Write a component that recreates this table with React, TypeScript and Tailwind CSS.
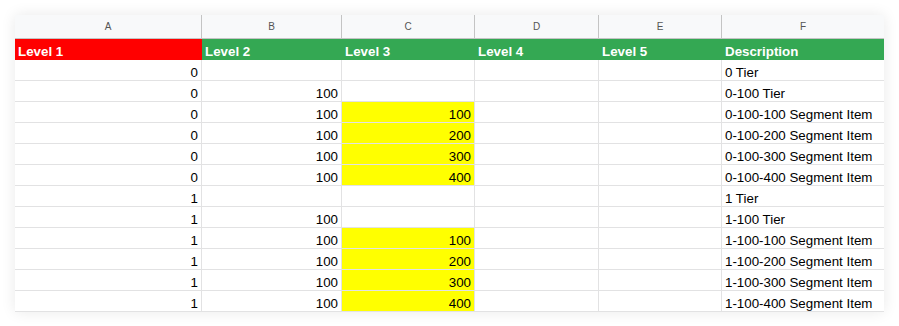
import React from "react";

type Row = { a: string; b: string; c: string; f: string };

const rows: Row[] = [
  { a: "0", b: "", c: "", f: "0 Tier" },
  { a: "0", b: "100", c: "", f: "0-100 Tier" },
  { a: "0", b: "100", c: "100", f: "0-100-100 Segment Item" },
  { a: "0", b: "100", c: "200", f: "0-100-200 Segment Item" },
  { a: "0", b: "100", c: "300", f: "0-100-300 Segment Item" },
  { a: "0", b: "100", c: "400", f: "0-100-400 Segment Item" },
  { a: "1", b: "", c: "", f: "1 Tier" },
  { a: "1", b: "100", c: "", f: "1-100 Tier" },
  { a: "1", b: "100", c: "100", f: "1-100-100 Segment Item" },
  { a: "1", b: "100", c: "200", f: "1-100-200 Segment Item" },
  { a: "1", b: "100", c: "300", f: "1-100-300 Segment Item" },
  { a: "1", b: "100", c: "400", f: "1-100-400 Segment Item" },
];

const cols = ["A", "B", "C", "D", "E", "F"];
const levels = ["Level 1", "Level 2", "Level 3", "Level 4", "Level 5", "Description"];

const grid = "grid grid-cols-[187px_140px_133px_124px_123px_162px]";
// sheets cells sit text on the bottom edge
const cell = "h-[21px] border-r border-b border-[#e2e2e3] px-[3px] flex items-end leading-[15px]";

export default function App() {
  return (
    <div className="w-[899px] h-[326px] bg-white p-[15px] font-['Liberation_Sans',Arial,sans-serif] text-[13.33px] text-black">
      <div className="w-[869px] h-[297px] bg-white shadow-[0_0_14px_rgba(0,0,0,0.09)] overflow-hidden">
        {/* column letters */}
        <div className={grid + " h-[24px] bg-[#f8f9fa] border-b border-[#c4c4c4]"}>
          {cols.map((c, i) => (
            <div
              key={c}
              className={
                "flex items-center justify-center text-[10px] text-[#555] " +
                (i < cols.length - 1 ? "border-r border-[#c4c4c4]" : "")
              }
            >
              {c}
            </div>
          ))}
        </div>

        {/* header row */}
        <div className={grid + " h-[21px] font-bold text-white"}>
          {levels.map((l, i) => (
            <div
              key={l}
              className={
                "flex items-end px-[3px] pb-[1px] leading-[15px] " +
                (i === 0 ? "bg-[#ff0000]" : "bg-[#34a853]")
              }
            >
              {l}
            </div>
          ))}
        </div>

        {rows.map((r, i) => (
          <div key={i} className={grid}>
            <div className={cell + " justify-end"}>{r.a}</div>
            <div className={cell + " justify-end"}>{r.b}</div>
            <div className={cell + " justify-end " + (r.c ? "bg-[#ffff00]" : "")}>{r.c}</div>
            <div className={cell}></div>
            <div className={cell}></div>
            <div className={cell + " border-r-0"}>{r.f}</div>
          </div>
        ))}
      </div>
    </div>
  );
}
